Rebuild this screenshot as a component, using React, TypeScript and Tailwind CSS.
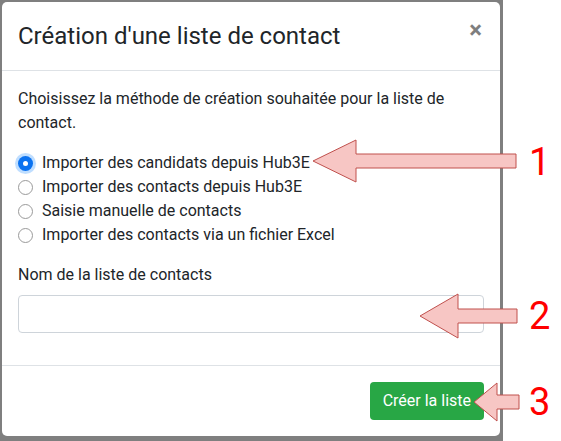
const OPTIONS = [
  "Importer des candidats depuis Hub3E",
  "Importer des contacts depuis Hub3E",
  "Saisie manuelle de contacts",
  "Importer des contacts via un fichier Excel",
];

function Radio({ checked }: { checked: boolean }) {
  if (checked) {
    return (
      <span className="flex h-[15px] w-[15px] items-center justify-center rounded-full bg-[#0b72f0] shadow-[0_0_0_3px_rgba(0,123,255,0.25)]">
        <span className="h-[5px] w-[5px] rounded-full bg-white" />
      </span>
    );
  }
  return <span className="h-[15px] w-[15px] rounded-full border border-[#9a9a9a] bg-white" />;
}

function Arrow({ tipX, tipY, baseX, endX, head, shaft }: { tipX: number; tipY: number; baseX: number; endX: number; head: number; shaft: number }) {
  const pts = [
    [tipX, tipY],
    [baseX, tipY - head],
    [baseX, tipY - shaft],
    [endX, tipY - shaft],
    [endX, tipY + shaft],
    [baseX, tipY + shaft],
    [baseX, tipY + head],
  ]
    .map((p) => p.join(","))
    .join(" ");
  return <polygon points={pts} fill="#f7c6c4" stroke="#c0504d" strokeWidth="1" />;
}

export default function App() {
  return (
    <div className="relative h-[441px] w-[561px] overflow-hidden bg-white font-['Roboto',sans-serif] text-[#212529]">
      <div className="h-[441px] w-[503px] bg-[#7f7f7f] pl-[2px] pt-[2px]">
        <div className="w-[498px] rounded-[5px] bg-white">
          <div className="flex items-start justify-between border-b border-[#dee2e6] p-4">
            <h5 className="text-[24px] leading-[36px]">Création d'une liste de contact</h5>
            <button className="-mt-[6px] mr-[2px] text-[24px] font-bold leading-[36px] text-black opacity-50">×</button>
          </div>

          <div className="p-4 text-[16px] leading-6">
            <p className="mb-4">Choisissez la méthode de création souhaitée pour la liste de contact.</p>
            <div className="mb-4">
              {OPTIONS.map((opt, i) => (
                <label key={opt} className="flex h-6 items-center">
                  <span className="flex w-[24px]">
                    <Radio checked={i === 0} />
                  </span>
                  <span>{opt}</span>
                </label>
              ))}
            </div>
            <div className="mb-4">
              <label className="mb-2 block">Nom de la liste de contacts</label>
              <input className="block h-[38px] w-full rounded-[4px] border border-[#ced4da] px-3 outline-none" />
            </div>
          </div>

          <div className="flex justify-end border-t border-[#dee2e6] p-4">
            <button className="h-[38px] rounded-[4px] bg-[#28a745] px-[13px] text-[16px] text-white">Créer la liste</button>
          </div>
        </div>
      </div>

      <svg className="pointer-events-none absolute left-0 top-0" width="561" height="441">
        <Arrow tipX={313} tipY={161} baseX={356} endX={516} head={21} shaft={7} />
        <Arrow tipX={420} tipY={316} baseX={458} endX={517} head={22} shaft={7} />
        <Arrow tipX={474} tipY={402} baseX={497} endX={519} head={19} shaft={7} />
      </svg>
      <div className="absolute left-[529px] top-[140px] text-[38px] leading-[44px] text-[#ff0000]">1</div>
      <div className="absolute left-[529px] top-[294px] text-[38px] leading-[44px] text-[#ff0000]">2</div>
      <div className="absolute left-[529px] top-[380px] text-[38px] leading-[44px] text-[#ff0000]">3</div>
    </div>
  );
}
